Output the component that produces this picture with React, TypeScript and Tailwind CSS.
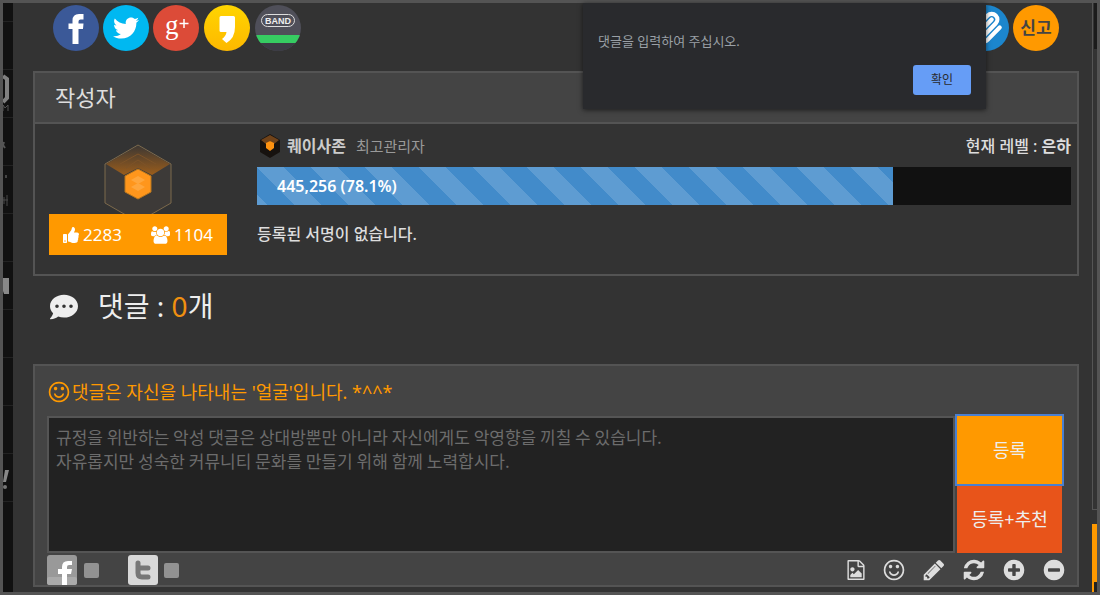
import { FC, ReactNode } from "react"
import { FaCommentDots, FaThumbsUp, FaTwitter } from "react-icons/fa"
import { Paperclip } from "lucide-react"

const RING =
    "M1664 896q0 209-103 385.5t-279.5 279.5-385.5 103-385.5-103-279.5-279.5-103-385.5 103-385.5 279.5-279.5 385.5-103 385.5 103 279.5 279.5 103 385.5z"

const ICONS = {
    image: "M1596 380q28 28 48 76t20 88v1152q0 40-28 68t-68 28h-1344q-40 0-68-28t-28-68v-1600q0-40 28-68t68-28h896q40 0 88 20t76 48zm-444-244v376h376q-10-29-22-41l-313-313q-12-12-41-22zm384 1528v-1024h-416q-40 0-68-28t-28-68v-416h-768v1536h1280zm-128-448v320h-1024v-192l192-192 128 128 384-384zm-832-192q-80 0-136-56t-56-136 56-136 136-56 136 56 56 136-56 136-136 56z",
    smile: "M1262 1075q-37 121-138 195t-228 74-228-74-138-195q-8-25 4-48.5t38-31.5q25-8 48.5 4t31.5 38q25 80 92.5 129.5t151.5 49.5 151.5-49.5 92.5-129.5q8-26 32-38t49-4 37 31.5 4 48.5zm-494-435q0 53-37.5 90.5t-90.5 37.5-90.5-37.5-37.5-90.5 37.5-90.5 90.5-37.5 90.5 37.5 37.5 90.5zm512 0q0 53-37.5 90.5t-90.5 37.5-90.5-37.5-37.5-90.5 37.5-90.5 90.5-37.5 90.5 37.5 37.5 90.5zm256 256q0-130-51-248.5t-136.5-204-204-136.5-248.5-51-248.5 51-204 136.5-136.5 204-51 248.5 51 248.5 136.5 204 204 136.5 248.5 51 248.5-51 204-136.5 136.5-204 51-248.5zm128 0q0 209-103 385.5t-279.5 279.5-385.5 103-385.5-103-279.5-279.5-103-385.5 103-385.5 279.5-279.5 385.5-103 385.5 103 279.5 279.5 103 385.5z",
    pencil: "M491 1536l91-91-235-235-91 91v107h128v128h107zm523-928q0-22-22-22-10 0-17 7l-542 542q-7 7-7 17 0 22 22 22 10 0 17-7l542-542q7-7 7-17zm-54-192l416 416-832 832h-416v-416zm683 96q0 53-37 90l-166 166-416-416 166-165q36-38 90-38 53 0 91 38l235 234q37 39 37 91z",
    refresh: "M1639 1056q0 5-1 7-64 268-268 434.5t-478 166.5q-146 0-282.5-55t-243.5-157l-129 129q-19 19-45 19t-45-19-19-45v-448q0-26 19-45t45-19h448q26 0 45 19t19 45-19 45l-137 137q71 66 161 102t187 36q134 0 250-65t186-179q11-17 53-117 8-23 30-23h192q13 0 22.5 9.5t9.5 22.5zm25-800v448q0 26-19 45t-45 19h-448q-26 0-45-19t-19-45 19-45l138-138q-148-137-349-137-134 0-250 65t-186 179q-11 17-53 117-8 23-30 23h-199q-13 0-22.5-9.5t-9.5-22.5v-7q65-268 270-434.5t480-166.5q146 0 284 55.5t245 156.5l130-129q19-19 45-19t45 19 19 45z",
    plus: `M1344 960v-128q0-26-19-45t-45-19h-256v-256q0-26-19-45t-45-19h-128q-26 0-45 19t-19 45v256h-256q-26 0-45 19t-19 45v128q0 26 19 45t45 19h256v256q0 26 19 45t45 19h128q26 0 45-19t19-45v-256h256q26 0 45-19t19-45z${RING}`,
    minus: `M1344 960v-128q0-26-19-45t-45-19h-768q-26 0-45 19t-19 45v128q0 26 19 45t45 19h768q26 0 45-19t19-45z${RING}`,
    users: "M593 896q-162 5-265 128h-134q-82 0-138-40.5t-56-118.5q0-353 124-353 6 0 43.5 21t97.5 42.5 119 21.5q67 0 133-23-5 37-5 66 0 159 93 293zm1071 637q0 120-73 189.5t-194 69.5h-874q-121 0-194-69.5t-73-189.5q0-53 3.5-103.5t14-109 26.5-108.5 43-97.5 62-81 85.5-53.5 111.5-20q10 0 43 21.5t73 48 107 48 135 21.5 135-21.5 107-48 73-48 43-21.5q61 0 111.5 20t85.5 53.5 62 81 43 97.5 26.5 108.5 14 109 3.5 103.5zm-1024-1277q0 106-75 181t-181 75-181-75-75-181 75-181 181-75 181 75 75 181zm704 384q0 159-112.5 271.5t-271.5 112.5-271.5-112.5-112.5-271.5 112.5-271.5 271.5-112.5 271.5 112.5 112.5 271.5zm576 225q0 78-56 118.5t-138 40.5h-134q-103-123-265-128 93-134 93-293 0-29-5-66 66 23 133 23 59 0 119-21.5t97.5-42.5 43.5-21q124 0 124 353zm-128-609q0 106-75 181t-181 75-181-75-75-181 75-181 181-75 181 75 75 181z",
}

interface IconProps {
    name: keyof typeof ICONS
    className?: string
}

const Icon: FC<IconProps> = ({ name, className }) => (
    <svg
        viewBox={name === "users" ? "0 0 1920 1792" : "0 0 1792 1792"}
        fill="currentColor"
        fillRule="evenodd"
        className={className}
        aria-hidden="true"
    >
        <path d={ICONS[name]} />
    </svg>
)

// Only the right edge of the menu is visible, so each cell holds a clipped glyph
const menuCells: ReactNode[] = [
    null,
    <>
        <path d="M0 6L4 9V28L0 32" fill="none" stroke="#808080" strokeWidth="4" />
        <path d="M0 41V35L2 38L5 35V41" fill="none" stroke="#555" />
    </>,
    <path d="M1 24L0 27L2 30" fill="none" stroke="#555" strokeWidth="2" />,
    <>
        <rect x="2" y="9" width="2" height="3" fill="#444" />
        <path d="M0 34H5M4 29V40M1 31V38" fill="none" stroke="#4a4a4a" />
    </>,
    null,
    <path d="M0 16H6V32H1L0 29Z" fill="#888" />,
    null,
    null,
    null,
    <>
        <path d="M2 16H6L3 28H0Z" fill="#888" />
        <rect x="0" y="31" width="4" height="4" rx="2" fill="#777" />
    </>,
]

const SideMenu: FC = () => (
    <nav className="flex w-[10px] shrink-0 flex-col overflow-hidden bg-[#111]">
        <div className="h-[19px] border-b border-[#222]" />
        {menuCells.map((cell, index) => (
            <div key={index} className="h-12 border-b border-[#222]">
                <svg viewBox="0 0 10 48" className="h-12 w-[10px]" aria-hidden="true">
                    {cell}
                </svg>
            </div>
        ))}
        <div className="flex-1" />
    </nav>
)

interface ShareButtonProps {
    label: string
    className: string
    children: ReactNode
}

const ShareButton: FC<ShareButtonProps> = ({ label, className, children }) => (
    <button
        type="button"
        aria-label={label}
        className={`flex size-[46px] items-center justify-center overflow-hidden rounded-full ${className}`}
    >
        {children}
    </button>
)

const ShareBar: FC = () => (
    <div className="flex items-center justify-between px-5 pt-[2px]">
        <div className="flex gap-1">
            <ShareButton label="Facebook" className="bg-[#3b5998]">
                <svg viewBox="0 0 46 46" className="size-[46px]">
                    <path
                        d="M19.500 39V24H15.500V18.500H19.500V15.500Q19.500 9 26 9H30.500V14.500H27.500Q25.500 14.500 25.500 16.500V18.500H30.500L30 24H25.500V39Z"
                        fill="#fff"
                    />
                </svg>
            </ShareButton>
            <ShareButton label="Twitter" className="bg-[#00b8f1] text-white">
                <FaTwitter size={26} />
            </ShareButton>
            <ShareButton label="Google+" className="bg-[#dc4b38]">
                <svg viewBox="0 0 46 46" className="size-[46px]" fill="#fff">
                    <text x="12" y="29" fontSize="27" fontFamily="Liberation Serif, serif">
                        g
                    </text>
                    <path d="M26.500 18.500H35.500M31 14V23" stroke="#fff" strokeWidth="1.500" />
                </svg>
            </ShareButton>
            <ShareButton
                label="KakaoStory"
                className="ml-px bg-linear-to-b from-[#ffd500] to-[#fdb800]"
            >
                <svg viewBox="0 0 46 46" className="size-[46px]">
                    <path
                        d="M17 11H29.500Q31 11 31 12.500V22Q31 33 22.500 38L18 34Q22 31 22.500 27H17Q15.500 27 15.500 25.500V12.500Q15.500 11 17 11Z"
                        fill="#fff"
                    />
                </svg>
            </ShareButton>
            <ShareButton label="BAND" className="ml-px bg-[#4f4f59]">
                <svg viewBox="0 0 46 46" className="size-[46px]">
                    <rect y="38" width="46" height="8" fill="#3b3b44" />
                    <rect y="30" width="46" height="8" fill="#36cc62" />
                    <rect
                        x="6.500"
                        y="9.500"
                        width="33"
                        height="12"
                        rx="6"
                        fill="none"
                        stroke="#ddd"
                    />
                    <text
                        x="23"
                        y="19"
                        textAnchor="middle"
                        fontSize="9"
                        fontWeight="700"
                        fontFamily="Liberation Sans, sans-serif"
                        fill="#eee"
                    >
                        BAND
                    </text>
                </svg>
            </ShareButton>
        </div>
        <div className="flex gap-1">
            <ShareButton label="링크 복사" className="bg-[#1c86cd] text-white">
                <Paperclip size={34} strokeWidth={3} />
            </ShareButton>
            <ShareButton
                label="신고"
                className="bg-[#ff9900] text-[17px] font-semibold text-[#444]"
            >
                신고
            </ShareButton>
        </div>
    </div>
)

const Emblem: FC = () => (
    <svg viewBox="0 0 68 70" className="h-[70px] w-[68px]" aria-hidden="true">
        <defs>
            <linearGradient id="lid" x1="0" y1="0" x2="0" y2="1">
                <stop offset="0" stopColor="#3f3832" />
                <stop offset="1" stopColor="#9a5d1c" />
            </linearGradient>
        </defs>
        <path d="M34 1L67 20V59L34 78L1 59V20Z" fill="#3d3a38" stroke="#7d6a4c" />
        <path d="M34 2L66 20L48 31L34 24L20 31L2 20Z" fill="url(#lid)" />
        <path d="M16 20L34 10L52 20M22 24L34 16L46 24" fill="none" stroke="#7d5328" />
        <path d="M34 25L47 32V48L34 55L21 48V32Z" fill="#ff961c" stroke="#b9771f" />
        <path d="M27 36L34 32L41 36L34 40ZM27 43L34 39L41 43L34 47Z" fill="#ffa63c" />
    </svg>
)

const RankBadge: FC = () => (
    <svg viewBox="0 0 22 24" className="h-6 w-[22px]" aria-hidden="true">
        <path d="M11 0L21 6V18L11 24L1 18V6Z" fill="#17120f" />
        <path d="M11 1L20 6L15 10L11 7L7 10L2 6Z" fill="#70431a" />
        <path d="M11 7L15 9V14L11 17L7 14V9Z" fill="#ff9210" />
    </svg>
)

const AuthorCard: FC = () => {
    const percent = 78.1

    return (
        <section className="mt-5 border-2 border-[#545454]">
            <h2 className="border-b-2 border-[#545454] bg-[#444] pt-2 pb-[9px] pl-5 text-[22px] leading-8 text-[#ddd]">
                작성자
            </h2>
            <div className="flex gap-[30px] pt-5 pr-[6px] pb-[19px] pl-[14px]">
                <div className="flex w-[178px] shrink-0 flex-col items-center">
                    <Emblem />
                    <div className="flex h-[41px] w-full items-center justify-between bg-[#ff9900] px-[14px] text-[17px] text-white">
                        <span className="flex items-center gap-1">
                            <FaThumbsUp size={16} />
                            2283
                        </span>
                        <span className="flex items-center gap-1">
                            <Icon name="users" className="h-[18px] w-[19px]" />
                            1104
                        </span>
                    </div>
                </div>
                <div className="-mt-[10px] min-w-0 flex-1 text-base leading-6 text-[#ddd]">
                    <div className="flex items-center">
                        <span className="ml-[2px]">
                            <RankBadge />
                        </span>
                        <strong className="ml-[6px] font-bold text-[#ccc]">퀘이사존</strong>
                        <span className="ml-[10px] text-[15px] text-[#999]">최고관리자</span>
                        <span className="ml-auto font-medium">
                            현재 레벨 : <b>은하</b>
                        </span>
                    </div>
                    <div className="mt-[9px] h-[38px] bg-[#111]">
                        <div
                            className="flex h-full items-center bg-[#428bca] bg-[linear-gradient(45deg,rgba(255,255,255,0.15)_25%,transparent_25%,transparent_50%,rgba(255,255,255,0.15)_50%,rgba(255,255,255,0.15)_75%,transparent_75%,transparent)] bg-[length:54px_54px] pl-5 font-semibold text-white"
                            style={{ width: `${percent}%` }}
                        >
                            445,256 ({percent}%)
                        </div>
                    </div>
                    <p className="mt-[17px] font-medium">등록된 서명이 없습니다.</p>
                </div>
            </div>
        </section>
    )
}

const placeholder =
    "규정을 위반하는 악성 댓글은 상대방뿐만 아니라 자신에게도 악영향을 끼칠 수 있습니다.\n자유롭지만 성숙한 커뮤니티 문화를 만들기 위해 함께 노력합시다."

const tools: { name: keyof typeof ICONS; label: string }[] = [
    { name: "image", label: "사진" },
    { name: "smile", label: "이모티콘" },
    { name: "pencil", label: "편집" },
    { name: "refresh", label: "새로고침" },
    { name: "plus", label: "늘리기" },
    { name: "minus", label: "줄이기" },
]

const CommentForm: FC = () => (
    <form
        className="mt-[37px] border-2 border-[#545454] bg-[#444] pr-[15px] pl-3"
        onSubmit={(e) => e.preventDefault()}
    >
        <label
            htmlFor="comment"
            className="flex items-center gap-px pt-3 pb-[10px] text-lg leading-7 text-[#ff9900]"
        >
            <Icon name="smile" className="size-6" />
            댓글은 자신을 나타내는 '얼굴'입니다. *^^*
        </label>
        <div className="flex gap-[2px]">
            <textarea
                id="comment"
                placeholder={placeholder}
                className="h-[137px] min-w-0 flex-1 resize-none border-2 border-[#555] bg-[#222] px-[7px] py-[7px] font-['Noto_Sans_CJK_KR',sans-serif] text-[17px] leading-6 text-[#ddd] outline-none placeholder:text-[#6c6c6c]"
            />
            <div className="flex w-[105px] flex-col gap-[2px] text-lg text-[#eee]">
                <button
                    type="submit"
                    className="flex-1 bg-[#ff9900] outline-2 outline-[#4a7fd0]"
                >
                    등록
                </button>
                <button type="submit" className="flex-1 bg-[#e8541a]">
                    등록+추천
                </button>
            </div>
        </div>
        <div className="flex items-center justify-between pt-[2px]">
            <div className="flex gap-[29px]">
                <label className="flex items-center gap-[7px]" aria-label="Facebook">
                    <svg viewBox="0 0 30 30" className="size-[30px]">
                        <rect width="30" height="30" rx="3" fill="#999" />
                        <rect y="22" width="30" height="8" rx="2" fill="#aaa" />
                        <path
                            d="M15 30V19H11V14H15V12Q15 6 21 6H25V10H22Q20 10 20 12V14H25L24 19H20V30Z"
                            fill="#fff"
                        />
                    </svg>
                    <input
                        type="checkbox"
                        className="size-[15px] appearance-none rounded-[2px] bg-[#929292]"
                    />
                </label>
                <label className="flex items-center gap-[6px]" aria-label="Twitter">
                    <svg viewBox="0 0 30 30" className="size-[30px]">
                        <rect width="30" height="30" rx="3" fill="#d8d8d8" />
                        <path
                            d="M10 8V18Q10 22 14 22H20M10 13H20"
                            fill="none"
                            stroke="#777"
                            strokeWidth="5"
                            strokeLinecap="round"
                        />
                    </svg>
                    <input
                        type="checkbox"
                        className="size-[15px] appearance-none rounded-[2px] bg-[#929292]"
                    />
                </label>
            </div>
            <div className="-mr-1 flex items-center gap-4 text-[#ddd]">
                {tools.map((tool) => (
                    <button key={tool.name} type="button" aria-label={tool.label}>
                        <Icon
                            name={tool.name}
                            className={tool.name === "image" ? "size-5" : "size-6"}
                        />
                    </button>
                ))}
            </div>
        </div>
    </form>
)

const AlertDialog: FC = () => (
    <div
        role="alertdialog"
        aria-labelledby="alert-text"
        className="absolute top-0 right-[106px] flex h-[106px] w-[403px] flex-col justify-between bg-[#292a2d] px-[15px] pt-7 pb-[14px] shadow-[0_1px_5px_rgba(0,0,0,0.6)]"
    >
        <p id="alert-text" className="text-[13px] leading-5 text-[#9aa0a6]">
            댓글을 입력하여 주십시오.
        </p>
        <button
            type="button"
            className="h-[30px] w-[58px] self-end rounded-[3px] bg-[#669df6] text-xs text-[#292a2d]"
        >
            확인
        </button>
    </div>
)

const SideRail: FC = () => (
    <div className="flex w-[5px] shrink-0 flex-col">
        <div className="flex-1 border-b border-l border-[#555]">
            <div className="ml-px h-[46px] bg-[#1b1b1b]" />
        </div>
        <div className="mt-[14px] h-[58px] bg-[#ff9900]" />
        <div className="h-[10px] border-l-2 border-[#ff9900] bg-[#222]" />
    </div>
)

const App: FC = () => (
    <div className="flex min-h-screen border-3 border-[#545454] bg-[#333] font-['Noto_Sans','Noto_Sans_CJK_KR',sans-serif]">
        <SideMenu />
        <main className="relative min-w-0 flex-1 pr-[13px] pb-[5px] pl-5">
            <ShareBar />
            <AuthorCard />
            <h2 className="mt-[10px] flex items-center pl-[17px] text-[28px] leading-[41px] text-[#eee]">
                <FaCommentDots size={28} className="mr-5" />
                <span>
                    댓글 : <span className="text-[#f09010]">0</span>개
                </span>
            </h2>
            <CommentForm />
            <AlertDialog />
        </main>
        <SideRail />
    </div>
)

export default App
